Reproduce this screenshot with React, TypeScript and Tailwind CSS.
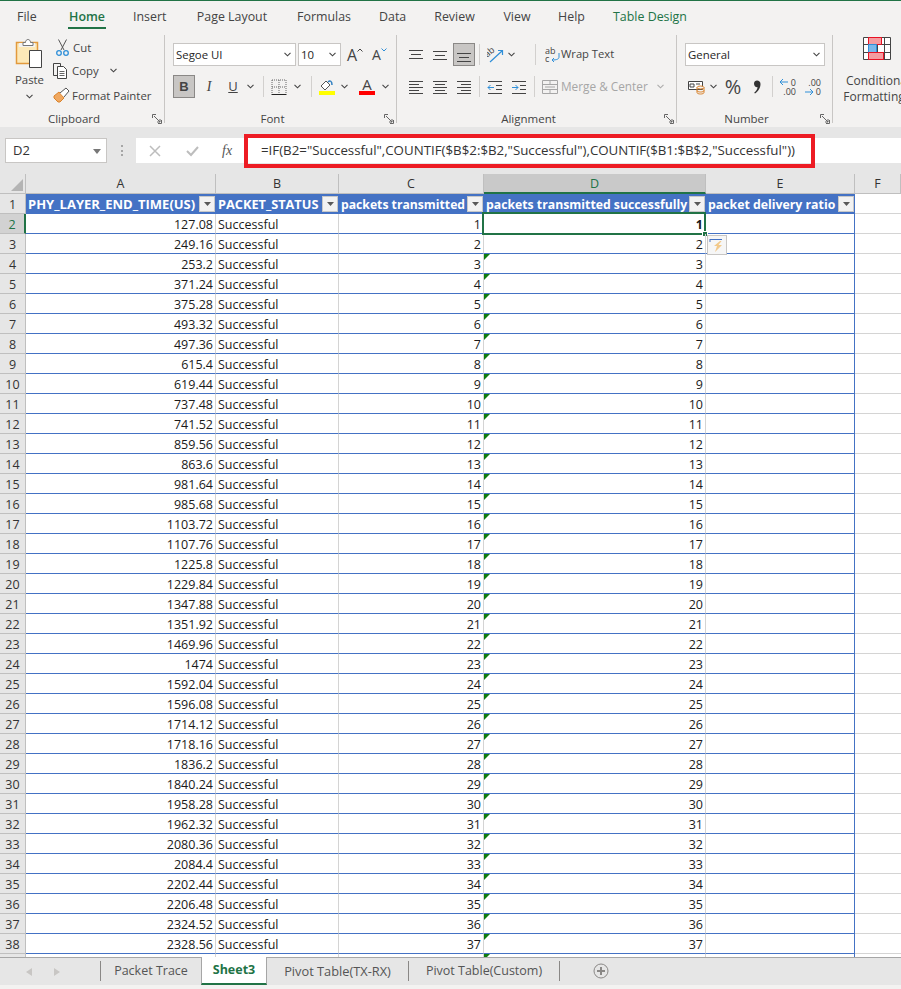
import type { ReactNode } from "react";

const times = [
  "127.08", "249.16", "253.2", "371.24", "375.28", "493.32", "497.36", "615.4", "619.44", "737.48",
  "741.52", "859.56", "863.6", "981.64", "985.68", "1103.72", "1107.76", "1225.8", "1229.84", "1347.88",
  "1351.92", "1469.96", "1474", "1592.04", "1596.08", "1714.12", "1718.16", "1836.2", "1840.24", "1958.28",
  "1962.32", "2080.36", "2084.4", "2202.44", "2206.48", "2324.52", "2328.56", "2446.6",
];

const tabs = ["File", "Home", "Insert", "Page Layout", "Formulas", "Data", "Review", "View", "Help", "Table Design"];
const tabLefts = ["w-[17px] ml-[17px]", "w-[38px] ml-[34px]", "w-[33px] ml-[27px]", "w-[72px] ml-[30px]", "w-[54px] ml-[29px]", "w-[27px] ml-[28px]", "w-[41px] ml-[28px]", "w-[28px] ml-[28px]", "w-[27px] ml-[27px]", "w-[76px] ml-[27px]"];

const grid = "grid grid-cols-[26px_190px_123px_145px_222px_149px_1fr] grid-rows-[20px]";

const Chevron = ({ className = "" }: { className?: string }) => (
  <svg width="7" height="5" viewBox="0 0 7 5" className={className}>
    <path d="M0.5 0.8 3.5 3.8 6.5 0.8" fill="none" stroke="#444" strokeWidth="1.1" />
  </svg>
);

const Launcher = () => (
  <svg width="10" height="10" viewBox="0 0 10 10" className="absolute right-[2px] bottom-[-1px]">
    <path d="M0.5 4V0.5H4M9.5 6v3.5H6M2 2l6 6M5 8h3V5" fill="none" stroke="#666" strokeWidth="1" />
  </svg>
);

const Group = ({ label, width, children }: { label: string; width: string; children: ReactNode }) => (
  <div className={`relative shrink-0 h-[88px] border-r border-[#c8c6c4] ${width}`}>
    {children}
    <div className="absolute bottom-[-4px] left-0 right-[16px] text-center text-[11.5px] leading-[16px] text-[#444]">{label}</div>
    <Launcher />
  </div>
);

const Sep = ({ className = "" }: { className?: string }) => <div className={`w-px h-[21px] bg-[#d2d0ce] shrink-0 ${className}`} />;

const Lines = ({ rows }: { rows: number[][] }) => (
  <svg width="16" height="16" viewBox="0 0 16 16">
    {rows.map(([x1, x2, y], i) => (
      <path key={i} d={`M${x1} ${y + 0.5}H${x2}`} stroke="#444" strokeWidth="1" />
    ))}
  </svg>
);

const Select = ({ text, className }: { text: string; className: string }) => (
  <div className={`flex items-center justify-between h-[23px] bg-white border border-[#c8c6c4] pl-[2px] pr-[4px] text-[11.4px] text-[#262626] ${className}`}>
    <span>{text}</span>
    <Chevron />
  </div>
);

const ClipboardGroup = () => (
  <Group label="Clipboard" width="w-[165px]">
    <div className="flex h-[72px]">
      <div className="flex flex-col items-center w-[59px] pt-[3px]">
        <svg width="30" height="30" viewBox="0 0 30 30">
          <path d="M1.5 4.5h21v21h-21z" fill="#fde9b8" stroke="#e29a3d" strokeWidth="1.5" />
          <path d="M4 5h16v4H4z" fill="#f3f2f1" />
          <path d="M8 4.5h2.5c0-4 5-4 5 0H18v3H8z" fill="#fff" stroke="#777" />
          <path d="M14.5 12.5h12v17h-12z" fill="#fff" stroke="#444" />
        </svg>
        <div className="text-[11.4px] leading-[16px] text-[#444] mt-[4px]">Paste</div>
        <Chevron className="mt-[6px]" />
      </div>
      <div className="flex flex-col text-[11.4px] text-[#444] -ml-[3px]">
        <div className="flex items-center h-[24px] pt-[2px]">
          <svg width="13" height="18" viewBox="0 0 13 18">
            <path d="M2.5 0.5 8 11M10.5 0.5 5 11" stroke="#555" fill="none" />
            <circle cx="3" cy="14" r="2.3" fill="none" stroke="#2f8fd8" strokeWidth="1.3" />
            <circle cx="10" cy="14" r="2.3" fill="none" stroke="#2f8fd8" strokeWidth="1.3" />
          </svg>
          <span className="ml-[4px]">Cut</span>
        </div>
        <div className="flex items-center h-[24px] -ml-[3px]">
          <svg width="16" height="16" viewBox="0 0 16 16">
            <path d="M4.5 12.5h-4v-12h7v3" fill="none" stroke="#444" />
            <path d="M4.5 3.5h6l3 3v9h-9z" fill="#fff" stroke="#444" />
            <path d="M6.5 8.5h5M6.5 10.5h5M6.5 12.5h5" stroke="#666" />
          </svg>
          <span className="ml-[3px]">Copy</span>
          <Chevron className="ml-[11px]" />
        </div>
        <div className="flex items-center h-[24px] mt-[1px] -ml-[3px] whitespace-nowrap">
          <svg width="17" height="16" viewBox="0 0 17 16">
            <path d="M1 9 6 5l5 6-4 4H5L1 11z" fill="#f0a860" stroke="#d9822b" />
            <path d="M7 6 13 1l3 3-5 6" fill="#fff" stroke="#555" />
          </svg>
          <span className="ml-[2px]">Format Painter</span>
        </div>
      </div>
    </div>
  </Group>
);

const FontGroup = () => (
  <Group label="Font" width="w-[232px]">
    <div className="flex items-center pl-[8px] pt-[8px]">
      <Select text="Segoe UI" className="w-[123px]" />
      <Select text="10" className="w-[43px] ml-[2px]" />
      <div className="ml-[6px] flex items-start w-[16px] text-[#444] text-[16px] leading-[20px]">
        A<svg width="6" height="4" viewBox="0 0 6 4" className="mt-[3px] shrink-0"><path d="M0.5 3.5 3 1l2.5 2.5" fill="none" stroke="#444" /></svg>
      </div>
      <div className="ml-[9px] flex items-start w-[15px] text-[#444] text-[14px] leading-[20px]">
        A<svg width="6" height="4" viewBox="0 0 6 4" className="mt-[3px] shrink-0"><path d="M0.5 0.5 3 3l2.5-2.5" fill="none" stroke="#2f8fd8" /></svg>
      </div>
    </div>
    <div className="flex items-center pl-[8px] mt-[9px] h-[23px] text-[#444]">
      <div className="flex items-center justify-center w-[22px] h-[23px] bg-[#c8c6c4] border border-[#8a8886] font-bold text-[13px] font-['Liberation_Sans',sans-serif]">B</div>
      <span className="w-[16px] ml-[6px] text-center italic text-[14px] font-['Liberation_Serif',serif]">I</span>
      <span className="w-[16px] ml-[8px] text-center underline text-[13px]">U</span>
      <Chevron className="ml-[6px]" />
      <Sep className="ml-[9px]" />
      <svg width="16" height="16" viewBox="0 0 16 16" className="ml-[7px]">
        <path d="M1 1h14M1 8h14M8 1v14M1 1v14M15 1v14" stroke="#666" strokeDasharray="1 1" fill="none" />
        <path d="M0.5 15.5h15" stroke="#222" />
      </svg>
      <Chevron className="ml-[7px]" />
      <Sep className="ml-[10px]" />
      <div className="ml-[7px] w-[16px] flex flex-col items-center">
        <svg width="16" height="12" viewBox="0 0 16 12">
          <path d="M2 7 7 2l4 4-5 5z" fill="#fff" stroke="#555" />
          <path d="M9 3c2-2 4-1 4 3" fill="none" stroke="#2f7fc1" strokeWidth="1.5" />
        </svg>
        <div className="w-[16px] h-[4px] bg-[#ffff00]" />
      </div>
      <Chevron className="ml-[6px]" />
      <div className="ml-[11px] w-[16px] flex flex-col items-center">
        <span className="text-[15px] leading-[13px] h-[13px]">A</span>
        <div className="w-[16px] h-[4px] bg-[#ff0000]" />
      </div>
      <Chevron className="ml-[7px]" />
    </div>
  </Group>
);

const AlignmentGroup = () => (
  <Group label="Alignment" width="w-[280px]">
    <div className="flex items-center pl-[11px] pt-[8px] h-[31px]">
      <Lines rows={[[1, 15, 3], [3, 13, 7], [1, 15, 11]]} />
      <div className="ml-[8px]"><Lines rows={[[1, 15, 4], [3, 13, 8], [1, 15, 12]]} /></div>
      <div className="ml-[5px] flex items-center justify-center w-[22px] h-[23px] bg-[#c8c6c4] border border-[#8a8886]">
        <Lines rows={[[1, 15, 6], [3, 13, 10], [1, 15, 14]]} />
      </div>
      <Sep className="ml-[4px]" />
      <svg width="17" height="17" viewBox="0 0 17 17" className="ml-[7px]">
        <text x="0" y="11" fontSize="9" fill="#444" transform="rotate(-40 1 11)">ab</text>
        <path d="M3 16 15 5M11 4.500h4.500V9" stroke="#2f8fd8" fill="none" strokeWidth="1.2" />
      </svg>
      <Chevron className="ml-[4px]" />
      <Sep className="ml-[20px]" />
      <svg width="15" height="16" viewBox="0 0 15 16" className="ml-[9px]">
        <text x="0" y="7" fontSize="9" fill="#444">ab</text>
        <text x="0" y="15" fontSize="9" fill="#444">c</text>
        <path d="M14 6v4c0 2-2 3-7 3M9 11l-2 2 2 2" stroke="#2f8fd8" fill="none" />
      </svg>
      <span className="ml-[1px] text-[11.2px] text-[#444] whitespace-nowrap">Wrap Text</span>
    </div>
    <div className="flex items-center pl-[11px] mt-[9px] h-[23px]">
      <Lines rows={[[1, 15, 2], [1, 11, 5], [1, 15, 8], [1, 11, 11], [1, 15, 14]]} />
      <div className="ml-[8px]"><Lines rows={[[1, 15, 2], [3, 13, 5], [1, 15, 8], [3, 13, 11], [1, 15, 14]]} /></div>
      <div className="ml-[8px]"><Lines rows={[[1, 15, 2], [5, 15, 5], [1, 15, 8], [5, 15, 11], [1, 15, 14]]} /></div>
      <Sep className="ml-[7px]" />
      <svg width="16" height="16" viewBox="0 0 16 16" className="ml-[7px]">
        <path d="M1 2.500h14M9 6.500h6M9 10.500h6M1 14.500h14" stroke="#444" fill="none" />
        <path d="M7 8.500H1M3.500 6 1 8.500 3.500 11" stroke="#2f8fd8" fill="none" />
      </svg>
      <svg width="16" height="16" viewBox="0 0 16 16" className="ml-[8px]">
        <path d="M1 2.500h14M9 6.500h6M9 10.500h6M1 14.500h14" stroke="#444" fill="none" />
        <path d="M1 8.500h6M4.500 6 7 8.500 4.500 11" stroke="#2f8fd8" fill="none" />
      </svg>
      <Sep className="ml-[7px]" />
      <svg width="16" height="16" viewBox="0 0 16 16" className="ml-[7px]">
        <path d="M0.500 1.500h15v13H0.500zM0.500 5.500h15M0.500 10.500h15M8 1.500v4M8 10.500v4M3 8h10" fill="none" stroke="#a6a6a6" />
      </svg>
      <span className="ml-[3px] text-[11.8px] text-[#a6a6a6] whitespace-nowrap">Merge &amp; Center</span>
      <Chevron className="ml-[9px] opacity-40" />
    </div>
  </Group>
);

const NumberGroup = () => (
  <Group label="Number" width="w-[156px]">
    <div className="pl-[8px] pt-[8px]">
      <Select text="General" className="w-[140px]" />
    </div>
    <div className="flex items-center pl-[11px] mt-[9px] h-[23px] text-[#444]">
      <svg width="17" height="16" viewBox="0 0 17 16">
        <path d="M0.500 2.500h14v8h-14z" fill="#fff" stroke="#444" />
        <path d="M2 5h4v3H2zM8 5h4" stroke="#444" fill="none" />
        <ellipse cx="12.500" cy="8.500" rx="3.500" ry="1.500" fill="#f3f2f1" stroke="#d9822b" />
        <path d="M9 8.500v5c0 2 7 2 7 0v-5M9 11.500c0 2 7 2 7 0" fill="none" stroke="#d9822b" />
      </svg>
      <Chevron className="ml-[5px]" />
      <span className="ml-[7px] w-[18px] text-[20px] leading-[23px] text-center">%</span>
      <svg width="8" height="14" viewBox="0 0 8 14" className="ml-[11px]">
        <path d="M1 3.500C1 1.500 2.500 0.500 4 0.500c2 0 3.500 1.500 3.500 3.500 0 4-2.500 7.500-5.500 9.500l-.8-.8C3 11 4.300 9.300 4.600 7.200 2.500 7.400 1 5.800 1 3.500z" fill="#333" />
      </svg>
      <Sep className="ml-[11px]" />
      <div className="ml-[6px] relative w-[17px] h-[18px] text-[9px] leading-[9px] text-right text-[#444]">
        <div>0</div><div>.00</div>
        <svg width="10" height="8" viewBox="0 0 10 8" className="absolute left-0 top-0"><path d="M9 4H1M4 1 1 4l3 3" fill="none" stroke="#2f8fd8" /></svg>
      </div>
      <div className="ml-[8px] relative w-[17px] h-[18px] text-[9px] leading-[9px] text-right text-[#444]">
        <div>.00</div><div>0</div>
        <svg width="10" height="8" viewBox="0 0 10 8" className="absolute left-0 bottom-0"><path d="M1 4h8M6 1l3 3-3 3" fill="none" stroke="#2f8fd8" /></svg>
      </div>
    </div>
  </Group>
);

const Ribbon = () => (
  <div className="flex h-[97px] pt-[5px] bg-[#f3f2f1] overflow-hidden">
    <ClipboardGroup />
    <FontGroup />
    <AlignmentGroup />
    <NumberGroup />
    <div className="flex flex-col items-center shrink-0 w-[90px] text-[12px] leading-[16px] text-[#444]">
      <svg width="28" height="23" viewBox="0 0 28 23" className="mt-[2px] mb-[13px] ml-[-2px]">
        <path d="M0.500 0.500h27v22h-27zM0.500 7.500h27M0.500 15.500h27M7.500 0.500v22M14.500 0.500v22M21.500 0.500v22" fill="#fff" stroke="#444" />
        <path d="M5.500 0.500h13v7h-13z" fill="#f49ca0" stroke="#e81123" />
        <path d="M5.500 7.500h8v8h-8z" fill="#7ab8ea" stroke="#2f8fd8" />
        <path d="M5.500 15.500h15v7h-15z" fill="#f49ca0" stroke="#e81123" />
      </svg>
      <div>Conditional</div>
      <div className="mr-[8px]">Formatting</div>
    </div>
  </div>
);

const FormulaBar = () => (
  <div className="relative flex items-start h-[47px] pt-[11px] bg-[#e6e6e6]">
    <div className="flex items-center justify-between w-[102px] h-[25px] ml-[5px] bg-white border border-[#c8c6c4] pl-[7px] pr-[5px] pt-[1px] text-[13px] text-[#333]">
      D2
      <svg width="8" height="5" viewBox="0 0 8 5"><path d="M0 0h8L4 5z" fill="#777" /></svg>
    </div>
    <div className="w-[2px] h-[11px] ml-[14px] mt-[7px] border-l-2 border-dotted border-[#a6a6a6]" />
    <div className="flex items-center h-[25px] w-[108px] ml-[13px] bg-white pl-[13px]">
      <svg width="12" height="12" viewBox="0 0 12 12"><path d="M1 1l10 10M11 1 1 11" stroke="#bdbdbd" strokeWidth="1.500" /></svg>
      <svg width="13" height="12" viewBox="0 0 13 12" className="ml-[25px]"><path d="M1 6l4 4 7-8" stroke="#bdbdbd" strokeWidth="2" fill="none" /></svg>
      <span className="ml-[23px] italic text-[14px] text-[#555] font-['Liberation_Serif',serif]">fx</span>
    </div>
    <div className="flex items-center flex-1 h-[25px] bg-white pl-[17px] pt-[1px] text-[13.3px] text-[#333] whitespace-nowrap">
      {'=IF(B2="Successful",COUNTIF($B$2:$B2,"Successful"),COUNTIF($B1:$B$2,"Successful"))'}
    </div>
    <div className="absolute left-[244px] top-[7px] w-[571px] h-[34px] border-[4px] border-[#ed1c24]" />
  </div>
);

const FilterButton = () => (
  <div className="flex items-center justify-center absolute right-[1px] top-[2px] w-[16px] h-[16px] bg-[#f2f2f2] border border-[#c8c8c8]">
    <svg width="7" height="4" viewBox="0 0 7 4"><path d="M0 0h7L3.500 4z" fill="#595959" /></svg>
  </div>
);

const Head = ({ text, size }: { text: string; size: string }) => (
  <div className={`relative h-[20px] bg-[#4472c4] px-[2px] text-white font-bold leading-[21px] whitespace-nowrap overflow-hidden ${size}`}>
    {text}
    <FilterButton />
  </div>
);

const ColHead = ({ text, active }: { text: string; active?: boolean }) => (
  <div className={`text-center text-[12.500px] leading-[19px] h-[20px] border-r border-[#bfbfbf] ${active ? "bg-[#c9c9c9] text-[#217346] border-b-2 border-b-[#217346]" : "border-b border-b-[#bfbfbf] text-[#333]"}`}>
    {text}
  </div>
);

const Row = ({ index, time }: { index: number; time: string }) => {
  const n = index - 1;
  const isActive = index === 2;
  return (
    <div className={`${grid} h-[20px] text-[12.500px] leading-[21px] text-[#1a1a1a]`}>
      <div className={`text-center border-b border-[#bfbfbf] ${isActive ? "bg-[#d2d2d2] text-[#217346] border-r-2 border-r-[#217346]" : "bg-[#e6e6e6] text-[#333] border-r border-r-[#bfbfbf]"}`}>{index}</div>
      <div className="text-right pr-[2px] border-r border-r-[#d4d4d4] border-b border-b-[#4472c4]">{time}</div>
      <div className="pl-[2px] border-r border-r-[#d4d4d4] border-b border-b-[#4472c4]">Successful</div>
      <div className="text-right pr-[2px] border-r border-r-[#d4d4d4] border-b border-b-[#4472c4]">{n}</div>
      <div className={`relative text-right pr-[2px] border-r border-r-[#d4d4d4] border-b border-b-[#4472c4] ${isActive ? "font-bold" : ""}`}>
        {index >= 4 && (
          <svg width="6" height="6" viewBox="0 0 6 6" className="absolute left-0 top-0"><path d="M0 0h6L0 6z" fill="#0f7b0f" /></svg>
        )}
        {n}
        {isActive && (
          <div className="absolute left-[-2px] top-[-2px] w-[224px] h-[23px] border-2 border-[#217346]">
            <div className="absolute right-[-4px] bottom-[-4px] w-[6px] h-[6px] bg-[#217346] border border-white" />
          </div>
        )}
        {index === 3 && (
          <div className="absolute left-[223px] top-[1px] z-10 flex items-center justify-center w-[20px] h-[20px] bg-[#f6f6f6] border border-[#c8c6c4]">
            <svg width="16" height="16" viewBox="0 0 16 16">
              <path d="M1 2.500h12M1 2v3" stroke="#4472c4" fill="none" />
              <path d="M11 4 5 9h3l-2 6 7-7H9.500l3-4z" fill="#f2c98a" />
            </svg>
          </div>
        )}
      </div>
      <div className="border-r border-r-[#4472c4] border-b border-b-[#4472c4]" />
      <div className="border-b border-b-[#d4d4d4]" />
    </div>
  );
};

const Sheet = () => (
  <div className="flex-1 overflow-hidden bg-white">
    <div className={`${grid} h-[20px] bg-[#e6e6e6]`}>
      <div className="relative h-[20px] border-r border-b border-[#bfbfbf]">
        <svg width="12" height="12" viewBox="0 0 12 12" className="absolute right-[2px] bottom-[2px]"><path d="M12 0v12H0z" fill="#b4b4b4" /></svg>
      </div>
      <ColHead text="A" />
      <ColHead text="B" />
      <ColHead text="C" />
      <ColHead text="D" active />
      <ColHead text="E" />
      <ColHead text="F" />
    </div>
    <div className={`${grid} h-[20px]`}>
      <div className="bg-[#e6e6e6] text-center text-[12.500px] leading-[21px] text-[#333] border-r border-b border-[#bfbfbf]">1</div>
      <Head text="PHY_LAYER_END_TIME(US)" size="text-[13px]" />
      <Head text="PACKET_STATUS" size="text-[12.750px]" />
      <Head text="packets transmitted" size="text-[12.200px]" />
      <Head text="packets transmitted successfully" size="text-[12.250px]" />
      <Head text="packet delivery ratio" size="text-[12.300px]" />
      <div className="border-b border-b-[#d4d4d4]" />
    </div>
    {times.map((t, i) => (
      <Row key={i} index={i + 2} time={t} />
    ))}
  </div>
);

const SheetTabs = () => (
  <div className="h-[32px] bg-[#f3f2f1]">
    <div className="flex items-start h-[28px] bg-[#e6e6e6] border-t border-[#a6a6a6] text-[12.500px] text-[#555]">
      <svg width="6" height="8" viewBox="0 0 6 8" className="ml-[26px] mt-[10px]"><path d="M6 0v8L0 4z" fill="#c8c6c4" /></svg>
      <svg width="6" height="8" viewBox="0 0 6 8" className="ml-[22px] mt-[10px]"><path d="M0 0v8l6-4z" fill="#c8c6c4" /></svg>
      <div className="w-px h-[20px] bg-[#8a8886] ml-[40px] mt-[3px]" />
      <div className="w-[100px] text-center leading-[26px]">Packet Trace</div>
      <div className="w-[66px] h-[28px] -mt-px bg-white border-x border-[#a6a6a6] border-b-2 border-b-[#217346] text-center font-bold text-[#217346] leading-[26px]">Sheet3</div>
      <div className="w-[141px] text-center text-[12.800px] leading-[26px]">Pivot Table(TX-RX)</div>
      <div className="w-px h-[20px] bg-[#8a8886] mt-[3px]" />
      <div className="w-[150px] text-center leading-[26px]">Pivot Table(Custom)</div>
      <div className="w-px h-[20px] bg-[#8a8886] mt-[3px]" />
      <svg width="16" height="16" viewBox="0 0 16 16" className="ml-[33px] mt-[5px]">
        <circle cx="8" cy="8" r="7" fill="none" stroke="#8a8886" />
        <path d="M8 4v8M4 8h8" stroke="#8a8886" strokeWidth="2" />
      </svg>
    </div>
  </div>
);

const App = () => (
  <div className="flex flex-col w-[901px] h-[989px] overflow-hidden bg-white font-['Open_Sans',sans-serif]">
    <div className="flex h-[30px] bg-[#f3f2f1] border-t-[1px] border-[#217346] text-[12.400px] leading-[31px] text-[#444]">
      {tabs.map((t, i) => (
        <div key={t} className={`relative shrink-0 text-center whitespace-nowrap ${tabLefts[i]} ${t === "Home" ? "font-semibold text-[#217346]" : ""} ${t === "Table Design" ? "text-[#217346]" : ""}`}>
          {t}
          {t === "Home" && <div className="absolute left-0 right-0 top-[26px] h-[2px] bg-[#217346]" />}
        </div>
      ))}
    </div>
    <Ribbon />
    <FormulaBar />
    <Sheet />
    <SheetTabs />
  </div>
);

export default App;
